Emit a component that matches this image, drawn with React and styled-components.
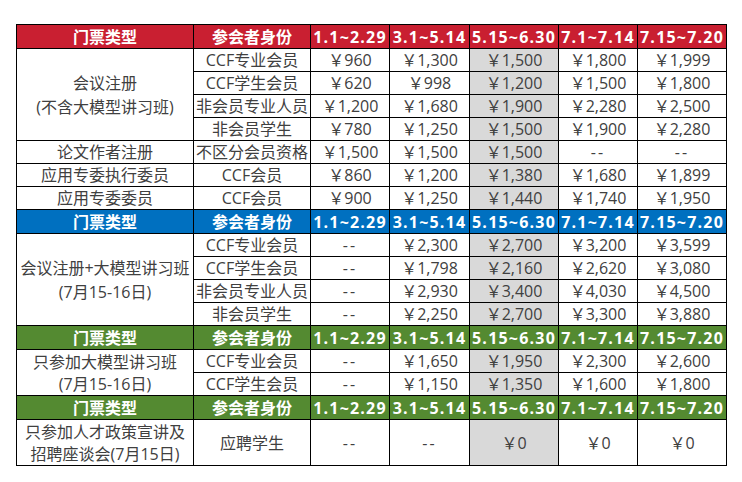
import styled, { createGlobalStyle } from "styled-components";

const GlobalStyle = createGlobalStyle`
    body {
        margin: 0;
        background: #fff;
        font-family: "Open Sans", "Noto Sans CJK SC", sans-serif;
    }
`

const colors = {
    red: '#c91f31',
    blue: '#0070c0',
    green: '#548a31',
    text: '#404040',
    shade: '#d9d9d9',
}

const periods = ['1.1~2.29', '3.1~5.14', '5.15~6.30', '7.1~7.14', '7.15~7.20'];
const colWidths = [177, 117, 79, 80, 89, 79, 89];

const sections = [
    {
        color: colors.red,
        groups: [
            {
                type: ['会议注册', '(不含大模型讲习班)'],
                rows: [
                    { who: 'CCF专业会员', prices: ['960', '1,300', '1,500', '1,800', '1,999'] },
                    { who: 'CCF学生会员', prices: ['620', '998', '1,200', '1,500', '1,800'] },
                    { who: '非会员专业人员', prices: ['1,200', '1,680', '1,900', '2,280', '2,500'] },
                    { who: '非会员学生', prices: ['780', '1,250', '1,500', '1,900', '2,280'] },
                ]
            },
            { type: ['论文作者注册'], rows: [{ who: '不区分会员资格', prices: ['1,500', '1,500', '1,500', null, null] }] },
            { type: ['应用专委执行委员'], rows: [{ who: 'CCF会员', prices: ['860', '1,200', '1,380', '1,680', '1,899'] }] },
            { type: ['应用专委委员'], rows: [{ who: 'CCF会员', prices: ['900', '1,250', '1,440', '1,740', '1,950'] }] },
        ]
    },
    {
        color: colors.blue,
        groups: [
            {
                type: ['会议注册+大模型讲习班', '(7月15-16日)'],
                rows: [
                    { who: 'CCF专业会员', prices: [null, '2,300', '2,700', '3,200', '3,599'] },
                    { who: 'CCF学生会员', prices: [null, '1,798', '2,160', '2,620', '3,080'] },
                    { who: '非会员专业人员', prices: [null, '2,930', '3,400', '4,030', '4,500'] },
                    { who: '非会员学生', prices: [null, '2,250', '2,700', '3,300', '3,880'] },
                ]
            },
        ]
    },
    {
        color: colors.green,
        groups: [
            {
                type: ['只参加大模型讲习班', '(7月15-16日)'],
                rows: [
                    { who: 'CCF专业会员', prices: [null, '1,650', '1,950', '2,300', '2,600'] },
                    { who: 'CCF学生会员', prices: [null, '1,150', '1,350', '1,600', '1,800'] },
                ]
            },
        ]
    },
    {
        color: colors.green,
        groups: [
            {
                type: ['只参加人才政策宣讲及', '招聘座谈会(7月15日)'],
                tall: true,
                rows: [
                    { who: '应聘学生', prices: [null, null, '0', '0', '0'] },
                ]
            },
        ]
    },
];

export default function App() {
    return (
        <Page>
            <GlobalStyle />
            <Table>
                <colgroup>
                    {colWidths.map((w, i) => <col key={i} style={{ width: w }} />)}
                </colgroup>
                <tbody>
                    {sections.map((section, s) => (
                        <Section key={s} section={section} />
                    ))}
                </tbody>
            </Table>
        </Page>
    );
}

function Section({ section }) {
    return (
        <>
            <tr>
                <HeadCell $bg={section.color}><Box $h={23}>门票类型</Box></HeadCell>
                <HeadCell $bg={section.color}><Box $h={23}>参会者身份</Box></HeadCell>
                {periods.map((p) => (
                    <HeadCell key={p} $bg={section.color}>
                        <Box $h={23} $date>{p}</Box>
                    </HeadCell>
                ))}
            </tr>
            {section.groups.map((group, g) => group.rows.map((row, r) => {
                const h = group.tall ? 45 : 22;
                const lineH = group.rows.length >= 4 ? 24 : 22;
                return (
                    <tr key={`${g}-${r}`}>
                        {r === 0 && (
                            <TypeCell rowSpan={group.rows.length}>
                                <TypeBox>
                                    {group.type.map((line, l) => (
                                        <Line key={l} $h={lineH}>{line}</Line>
                                    ))}
                                </TypeBox>
                            </TypeCell>
                        )}
                        <Cell><Box $h={h}>{row.who}</Box></Cell>
                        {row.prices.map((price, i) => (
                            <Cell key={i} $shade={i === 2}>
                                <Box $h={h}>
                                    {price === null ? <Dash>--</Dash> : `￥${price}`}
                                </Box>
                            </Cell>
                        ))}
                    </tr>
                )
            }))}
        </>
    )
}

const Page = styled.div`
    padding: 24px 16px;
`

const Table = styled.table`
    border-collapse: separate;
    border-spacing: 0;
    table-layout: fixed;
    width: 711px;
    border-top: 1px solid #000;
    border-left: 1px solid #000;
    font-size: 16px;
    color: ${colors.text};

    td {
        border-right: 1px solid #000;
        border-bottom: 1px solid #000;
        padding: 0;
        text-align: center;
        vertical-align: middle;
        white-space: nowrap;
    }
`

const Box = styled.div`
    height: ${(p) => p.$h}px;
    display: flex;
    align-items: center;
    justify-content: center;
    line-height: 16px;
    letter-spacing: ${(p) => (p.$date ? '1.2px' : '0')};
`

const HeadCell = styled.td`
    background-color: ${(p) => p.$bg};
    color: #fff;
    font-weight: 700;
`

const Cell = styled.td`
    background-color: ${(p) => (p.$shade ? colors.shade : '#fff')};
`

const Dash = styled.span`
    letter-spacing: 2px;
`

const TypeCell = styled.td`
    background-color: #fff;
`

const TypeBox = styled.div`
    display: flex;
    flex-direction: column;
    align-items: center;
`

const Line = styled.div`
    height: ${(p) => p.$h}px;
    display: flex;
    align-items: center;
    line-height: 16px;
`
